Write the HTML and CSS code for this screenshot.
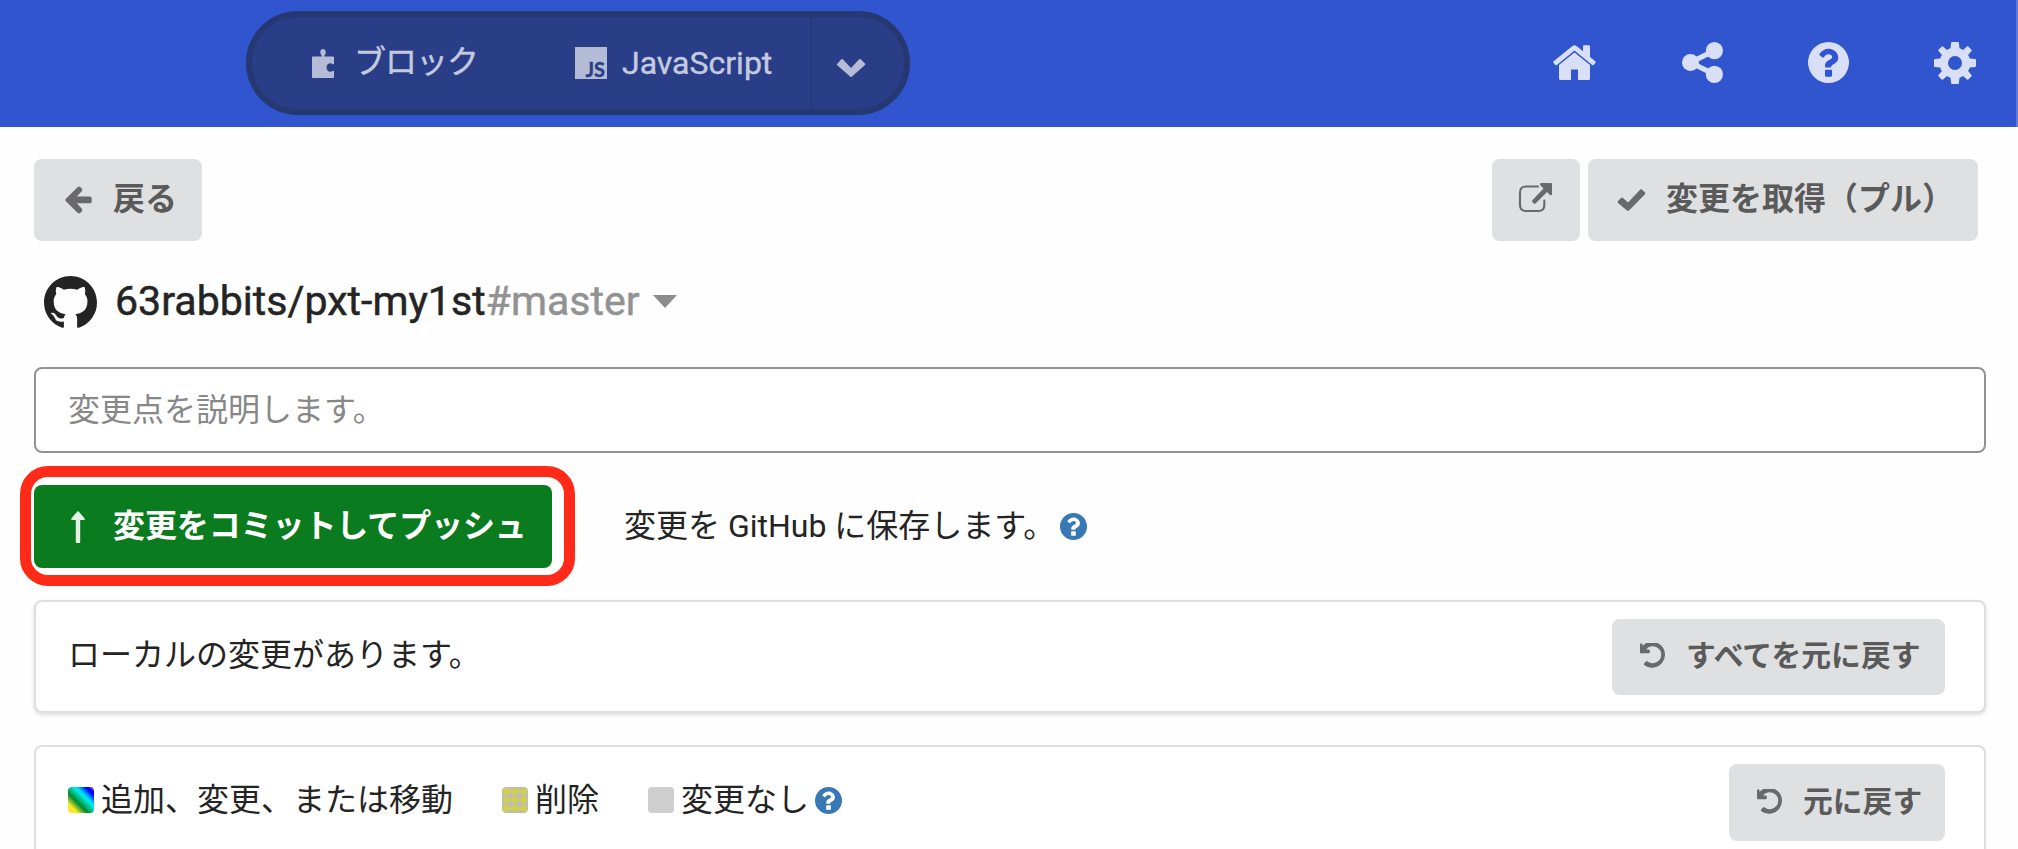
FILE: index.html
```
<!DOCTYPE html>
<html lang="ja">
<head>
<meta charset="utf-8">
<title>GitHub</title>
<link rel="stylesheet" href="styles.css">
</head>
<body>
<svg class="defs" width="0" height="0" aria-hidden="true">
  <symbol id="help" viewBox="0 0 512 512"><path fill-rule="evenodd" d="M256 0a256 256 0 1 1 0 512a256 256 0 0 1 0-512zM263 83c-56 0-92 24-120 66-4 6-3 13 3 17l35 27c5 4 13 3 17-3 18-23 30-36 58-36 20 0 46 13 46 34 0 15-13 23-34 35-25 14-55 31-55 73v12c0 6 5 11 11 11h56c6 0 11-5 11-11v-4c0-29 87-31 87-112 0-61-63-109-115-109zM222 345a10 10 0 0 0-10 10v68a10 10 0 0 0 10 10h68a10 10 0 0 0 10-10v-68a10 10 0 0 0-10-10z"/></symbol>
  <symbol id="undo" viewBox="0 0 26 26"><path d="M0 1.5Q0 .6.9.6h.8q.8 0 .8.8v1.5A13 13 0 1 1 4 22l-.1-1.2 2.2-2.5 1.2-.1A8.5 8.5 0 1 0 6 6.500l3 .1q.8 0 .8.8v2.100q0 .8-.8.8H.9q-.9 0-.9-.9z"/></symbol>
</svg>

<header class="menu">
  <nav class="editor-toggle">
    <a class="toggle-item toggle-blocks">
      <svg class="icon-puzzle" viewBox="0 0 22 29"><path d="M0 8.500Q0 7.500 1 7.500H9.700Q10 6.500 8.700 5C7.700 3 8.700 0 11 0s3.500 3 2.400 5Q12 6.500 12.500 7.500H21q1 0 1 1V15q-.8.700-1.500 0C18.500 13.500 14.500 14.500 14.500 18.500s4 5 6 3.500q.8-.6 1.500 0v6q0 1-1 1H1q-1 0-1-1z"/></svg>
      <span>ブロック</span>
    </a>
    <a class="toggle-item toggle-js">
      <span class="icon-js">JS</span>
      <span>JavaScript</span>
    </a>
    <a class="toggle-more">
      <svg class="icon-chevron" viewBox="0 0 30 20"><path d="M1 6.200 5.200 1.300Q6 .500 6.800 1.300L15 10 23.200 1.300Q24 .500 24.800 1.300L29 5.400Q29.700 6.200 29 7L15.700 18.700Q15 19.300 14.300 18.700L1 7Q.4 6.600 1 6.200z"/></svg>
    </a>
  </nav>
  <div class="actions">
    <svg class="icon-home" viewBox="0 0 43 35"><path d="M.6 16.200 19.500 1Q21.500-.6 23.500 1L30 6.300V1.200Q30 .2 31 .2H36Q37 .2 37 1.200V12L42.400 16.200Q43.200 17 42.500 17.800L40.700 20Q40 20.600 39.200 20L21.500 5.500 3.800 20Q3 20.600 2.300 20L.5 17.800Q-.2 17 .6 16.200z"/><path d="M21.500 7.500 37 20V33.500Q37 35 35.500 35H25V24.500H18V35H7.500Q6 35 6 33.500V20z"/></svg>
    <svg class="icon-share" viewBox="0 0 41 41"><circle cx="8.500" cy="20.500" r="8.500"/><circle cx="32.400" cy="8.600" r="8.600"/><circle cx="32.400" cy="32.400" r="8.600"/><path d="M8.500 20.500 32.400 8.600M8.500 20.500 32.400 32.400" stroke="currentColor" stroke-width="5.200"/></svg>
    <svg class="icon-help"><use href="#help"/></svg>
    <svg class="icon-gear" viewBox="-21 -21 42 42"><path fill-rule="evenodd" d="M-3.900-20.200Q-3.700-21-3-21H3Q3.700-21 3.900-20.200L4.500-14.800Q6.600-14 8-13.100L12-16.500Q12.700-17 13.300-16.500L16.500-13.300Q17-12.700 16.500-12L13.100-8Q14.300-6.200 14.800-4.500L20.200-3.900Q21-3.700 21-3V3Q21 3.700 20.200 3.900L14.800 4.500Q14.300 6.200 13.100 8L16.500 12Q17 12.700 16.500 13.300L13.300 16.500Q12.700 17 12 16.500L8 13.100Q6.600 14 4.500 14.800L3.900 20.200Q3.700 21 3 21H-3Q-3.700 21-3.900 20.200L-4.500 14.800Q-6.600 14-8 13.100L-12 16.500Q-12.700 17-13.300 16.500L-16.500 13.300Q-17 12.700-16.500 12L-13.100 8Q-14.300 6.200-14.800 4.500L-20.200 3.900Q-21 3.700-21 3V-3Q-21-3.700-20.200-3.900L-14.800-4.500Q-14.300-6.200-13.100-8L-16.500-12Q-17-12.700-16.500-13.300L-13.300-16.500Q-12.700-17-12-16.500L-8-13.100Q-6.600-14-4.500-14.800zM0-7A7 7 0 1 0 0 7A7 7 0 1 0 0-7z"/></svg>
  </div>
</header>

<main class="content">
  <div class="toolbar">
    <button class="btn btn-back">
      <svg class="icon-arrow" viewBox="0 0 27 28"><path d="M12.500 1.200Q14 0 15.500 1.200L16.800 2.500Q18 4 16.800 5.300L11.800 10.500H25Q26.700 10.500 26.700 12V15.800Q26.700 17.300 25 17.300H11.800L16.800 22.600Q18 24 16.800 25.400L15.500 26.700Q14 28 12.500 26.700L.9 15.200Q-.3 14 .9 12.700z"/></svg>
      <span>戻る</span>
    </button>
    <div class="toolbar-right">
      <button class="btn btn-external">
        <svg class="icon-external" viewBox="0 0 33 29"><path d="M19 3.500H7Q1 3.500 1 9.500V22Q1 28 7 28H19.500Q25.300 28 25.300 22V17.500" fill="none" stroke="currentColor" stroke-width="2.100" stroke-linecap="round"/><path d="M22 0H32Q33 0 33 1V11Q32.500 13 31 12L28 9 16.500 20.500Q15.500 21.200 14.700 20.400L13.300 19Q12.600 18.200 13.300 17.300L24.500 5.500 21.300 2.300Q20.200.600 22 0z"/></svg>
      </button>
      <button class="btn btn-pull">
        <svg class="icon-check" viewBox="0 0 28 22"><path d="M.5 12 3.500 9Q4.500 8.200 5.500 9L10.500 13.500 22.800.6Q23.600-.2 24.500.6L27.500 3.500Q28.300 4.400 27.500 5.300L11.500 21.500Q10.500 22.400 9.500 21.500L.5 14Q-.5 13 .5 12z"/></svg>
        <span>変更を取得（プル）</span>
      </button>
    </div>
  </div>

  <h1 class="repo">
    <svg class="icon-github" viewBox="0 0 16 16"><path d="M8 0C3.580 0 0 3.580 0 8c0 3.540 2.290 6.530 5.470 7.590.4.070.55-.17.55-.38 0-.19-.01-.82-.01-1.490-2.010.37-2.530-.49-2.690-.94-.09-.23-.48-.94-.82-1.130-.28-.15-.68-.52-.01-.53.63-.01 1.080.58 1.230.82.72 1.210 1.870.87 2.330.66.070-.52.28-.87.51-1.070-1.780-.2-3.640-.89-3.640-3.950 0-.87.31-1.590.82-2.150-.08-.2-.36-1.020.08-2.120 0 0 .67-.21 2.200.82.64-.18 1.320-.27 2-.27s1.360.09 2 .27c1.530-1.040 2.200-.82 2.200-.82.44 1.100.16 1.920.08 2.120.51.56.82 1.270.82 2.150 0 3.070-1.870 3.750-3.650 3.950.29.25.54.73.54 1.480 0 1.070-.01 1.930-.01 2.200 0 .21.15.46.55.38A8.010 8.010 0 0 0 16 8c0-4.420-3.580-8-8-8z"/></svg>
    <span class="repo-name">63rabbits/pxt-my1st</span><span class="branch">#master</span>
    <i class="caret"></i>
  </h1>

  <input class="message" type="text" placeholder="変更点を説明します。">

  <div class="commit">
    <div class="commit-action">
      <button class="btn btn-commit">
        <svg class="icon-up" viewBox="0 0 14 32"><path d="M6.300.4Q7 0 7.700.4L13.700 7.500Q14.200 9 13 9H9.200V31Q9.200 32 8.200 32H5.800Q4.800 32 4.800 31V9H1Q-.2 9 .3 7.500z"/></svg>
        <span>変更をコミットしてプッシュ</span>
      </button>
      <i class="highlight"></i>
    </div>
    <span class="commit-note">変更を GitHub に保存します。</span>
    <svg class="icon-info"><use href="#help"/></svg>
  </div>

  <section class="card card-local">
    <span class="local-text">ローカルの変更があります。</span>
    <button class="btn btn-revert">
      <svg class="icon-undo"><use href="#undo"/></svg>
      <span>すべてを元に戻す</span>
    </button>
  </section>

  <section class="card card-diff">
    <div class="legend">
      <span class="legend-item"><i class="swatch swatch-changed"></i>追加、変更、または移動</span>
      <span class="legend-item"><svg class="swatch" viewBox="0 0 25 25"><defs><pattern id="dots" x="0" y="0" width="8.200" height="8.200" patternUnits="userSpaceOnUse"><path fill="#d0d050" d="M4.100 0 8 3V5.200L4.100 8.200 .2 5.200V3z"/></pattern></defs><rect width="25" height="25" rx="4" fill="#bbb"/><rect width="25" height="25" rx="4" fill="url(#dots)"/></svg>削除</span>
      <span class="legend-item"><i class="swatch swatch-same"></i>変更なし</span>
      <svg class="icon-info"><use href="#help"/></svg>
    </div>
    <button class="btn btn-revert btn-revert-one">
      <svg class="icon-undo"><use href="#undo"/></svg>
      <span>元に戻す</span>
    </button>
  </section>
</main>
</body>
</html>
```

FILE: styles.css
```
* { box-sizing: border-box; }

body {
  margin: 0;
  background: #fefefe;
  color: #242424;
  font-family: Roboto, "Noto Sans CJK JP", sans-serif;
  font-size: 32px;
  line-height: 40px;
  white-space: nowrap;
}

svg { display: block; flex: none; fill: currentColor; overflow: visible; }
.defs { position: absolute; }

/* Header */
.menu {
  display: flex;
  justify-content: space-between;
  height: 127px;
  padding: 11px 40px 0 246px;
  background: #3155cf;
  border-right: 2px solid #5f7bda;
}

.editor-toggle {
  display: flex;
  width: 664px;
  height: 104px;
  border: 6px solid #263871;
  border-radius: 52px;
  background: #2a3e87;
  color: #c4cae0;
}

.toggle-item { display: flex; align-items: center; -webkit-text-stroke: .4px; }
.toggle-blocks { width: 290px; padding: 0 0 0 60px; gap: 20px; }
.toggle-blocks span { padding-bottom: 2px; letter-spacing: -1px; }
.toggle-js { width: 268px; padding-left: 33px; gap: 15px; }
.toggle-js span:last-child { padding-bottom: 1px; }
.toggle-more { flex: 1; border-left: 2px solid #283a7b; padding: 41px 0 0 24px; }
.icon-puzzle { width: 22px; height: 29px; opacity: .9; }
.icon-chevron { width: 30px; height: 20px; opacity: .9; }

.icon-js {
  display: flex;
  align-items: flex-end;
  justify-content: flex-end;
  width: 32px;
  height: 32px;
  padding-right: 2px;
  background: #b4bbd7;
  color: #2a3e87;
  font: 700 20px/19px Lato, sans-serif;
}

.actions { display: flex; gap: 85px; padding-top: 31px; color: #d9dff7; }
.icon-home { width: 43px; height: 35px; margin: 3px 1px 0 0; }
.icon-share, .icon-help { width: 41px; height: 41px; }
.icon-gear { width: 42px; height: 42px; }

/* Content */
.content { padding: 32px 32px 0 34px; }

.btn {
  display: flex;
  align-items: center;
  height: 82px;
  padding: 0;
  border: 0;
  border-radius: 8px;
  background: #dfe0e2;
  color: #5a5a5a;
  font: 700 32px/40px "Noto Sans CJK JP", sans-serif;
}
.btn span { padding-bottom: 8px; }
.btn svg { color: #696969; }

.toolbar { display: flex; justify-content: space-between; padding-right: 8px; }
.toolbar-right { display: flex; gap: 8px; }
.btn-back { width: 168px; padding-left: 31px; gap: 21px; }
.btn-external { width: 88px; padding: 0 0 6px 27px; }
.btn-pull { width: 390px; padding-left: 29px; gap: 20px; }
.icon-arrow { width: 27px; height: 28px; }
.icon-external { width: 33px; height: 29px; }
.icon-check { width: 29px; height: 22px; }

.repo {
  display: flex;
  align-items: center;
  height: 52px;
  margin: 35px 0 0;
  padding-left: 10px;
  font-size: 41.1px;
  font-weight: 400;
  line-height: 52px;
}
.repo span { padding-bottom: 2px; }
.icon-github { width: 53px; height: 53px; margin-right: 18px; }
.repo-name, .branch { -webkit-text-stroke: .5px; }
.branch { color: #929292; }
.caret {
  margin: 0 0 2px 13px;
  border: 12px solid transparent;
  border-top: 13px solid #8c8c8c;
  border-bottom: 0;
}

.message {
  display: block;
  width: 100%;
  height: 86px;
  margin-top: 39px;
  padding: 0 32px 7px;
  border: 2px solid #929295;
  border-radius: 8px;
  background: #fff;
  font: 32px/40px "Noto Sans CJK JP", sans-serif;
}
.message::placeholder { color: #888; opacity: 1; }

.commit { display: flex; align-items: center; margin-top: 32px; }
.commit-action { position: relative; }
.btn-commit { width: 518px; height: 83px; padding-left: 37px; gap: 28px; background: #0b7b1f; color: #fff; }
.btn-commit span { letter-spacing: -.1px; }
.btn-commit svg { color: #e4f1e6; }
.icon-up { width: 14px; height: 32px; }
.highlight {
  position: absolute;
  inset: -19px -23px -18px -14px;
  border: 11px solid #ff2a17;
  border-radius: 28px;
}
.commit-note { margin-left: 72px; padding-bottom: 2px; }
.icon-info { width: 27px; height: 27px; color: #3778b5; }
.commit .icon-info { margin-left: 5px; }

/* Cards */
.card {
  display: flex;
  align-items: center;
  justify-content: space-between;
  height: 113px;
  margin-top: 32px;
  padding: 0 39px 0 32px;
  border: 2px solid #dedede;
  border-radius: 8px;
  background: #fff;
  box-shadow: 0 2px 4px #0002;
}
.btn-revert { width: 333px; height: 76px; padding-left: 28px; gap: 20px; font-size: 29.800px; }
.btn-revert-one { width: 216px; height: 77px; }
.icon-undo { width: 26px; height: 26px; margin-bottom: 1px; }
.local-text { padding-bottom: 4px; }
.card-diff {
  align-items: flex-start;
  height: 104px;
  padding-top: 17px;
  border-bottom: 0;
  border-radius: 8px 8px 0 0;
  box-shadow: none;
}
.legend { display: flex; align-items: center; height: 72px; }
.legend-item { display: flex; align-items: center; margin-right: 49px; }
.legend-item:nth-child(3) { margin-right: 6px; }
.swatch { width: 26px; height: 26px; margin-right: 7px; border-radius: 4px; }
.swatch-changed { background: linear-gradient(45deg, #fd2 0%, #fe2 18%, #083 38%, #0a5 45%, #0ee 62%, #0cf 68%, #00f 84%, #20f 90%, #a8e 100%); }
.swatch-same { background: #cecece; }
```
